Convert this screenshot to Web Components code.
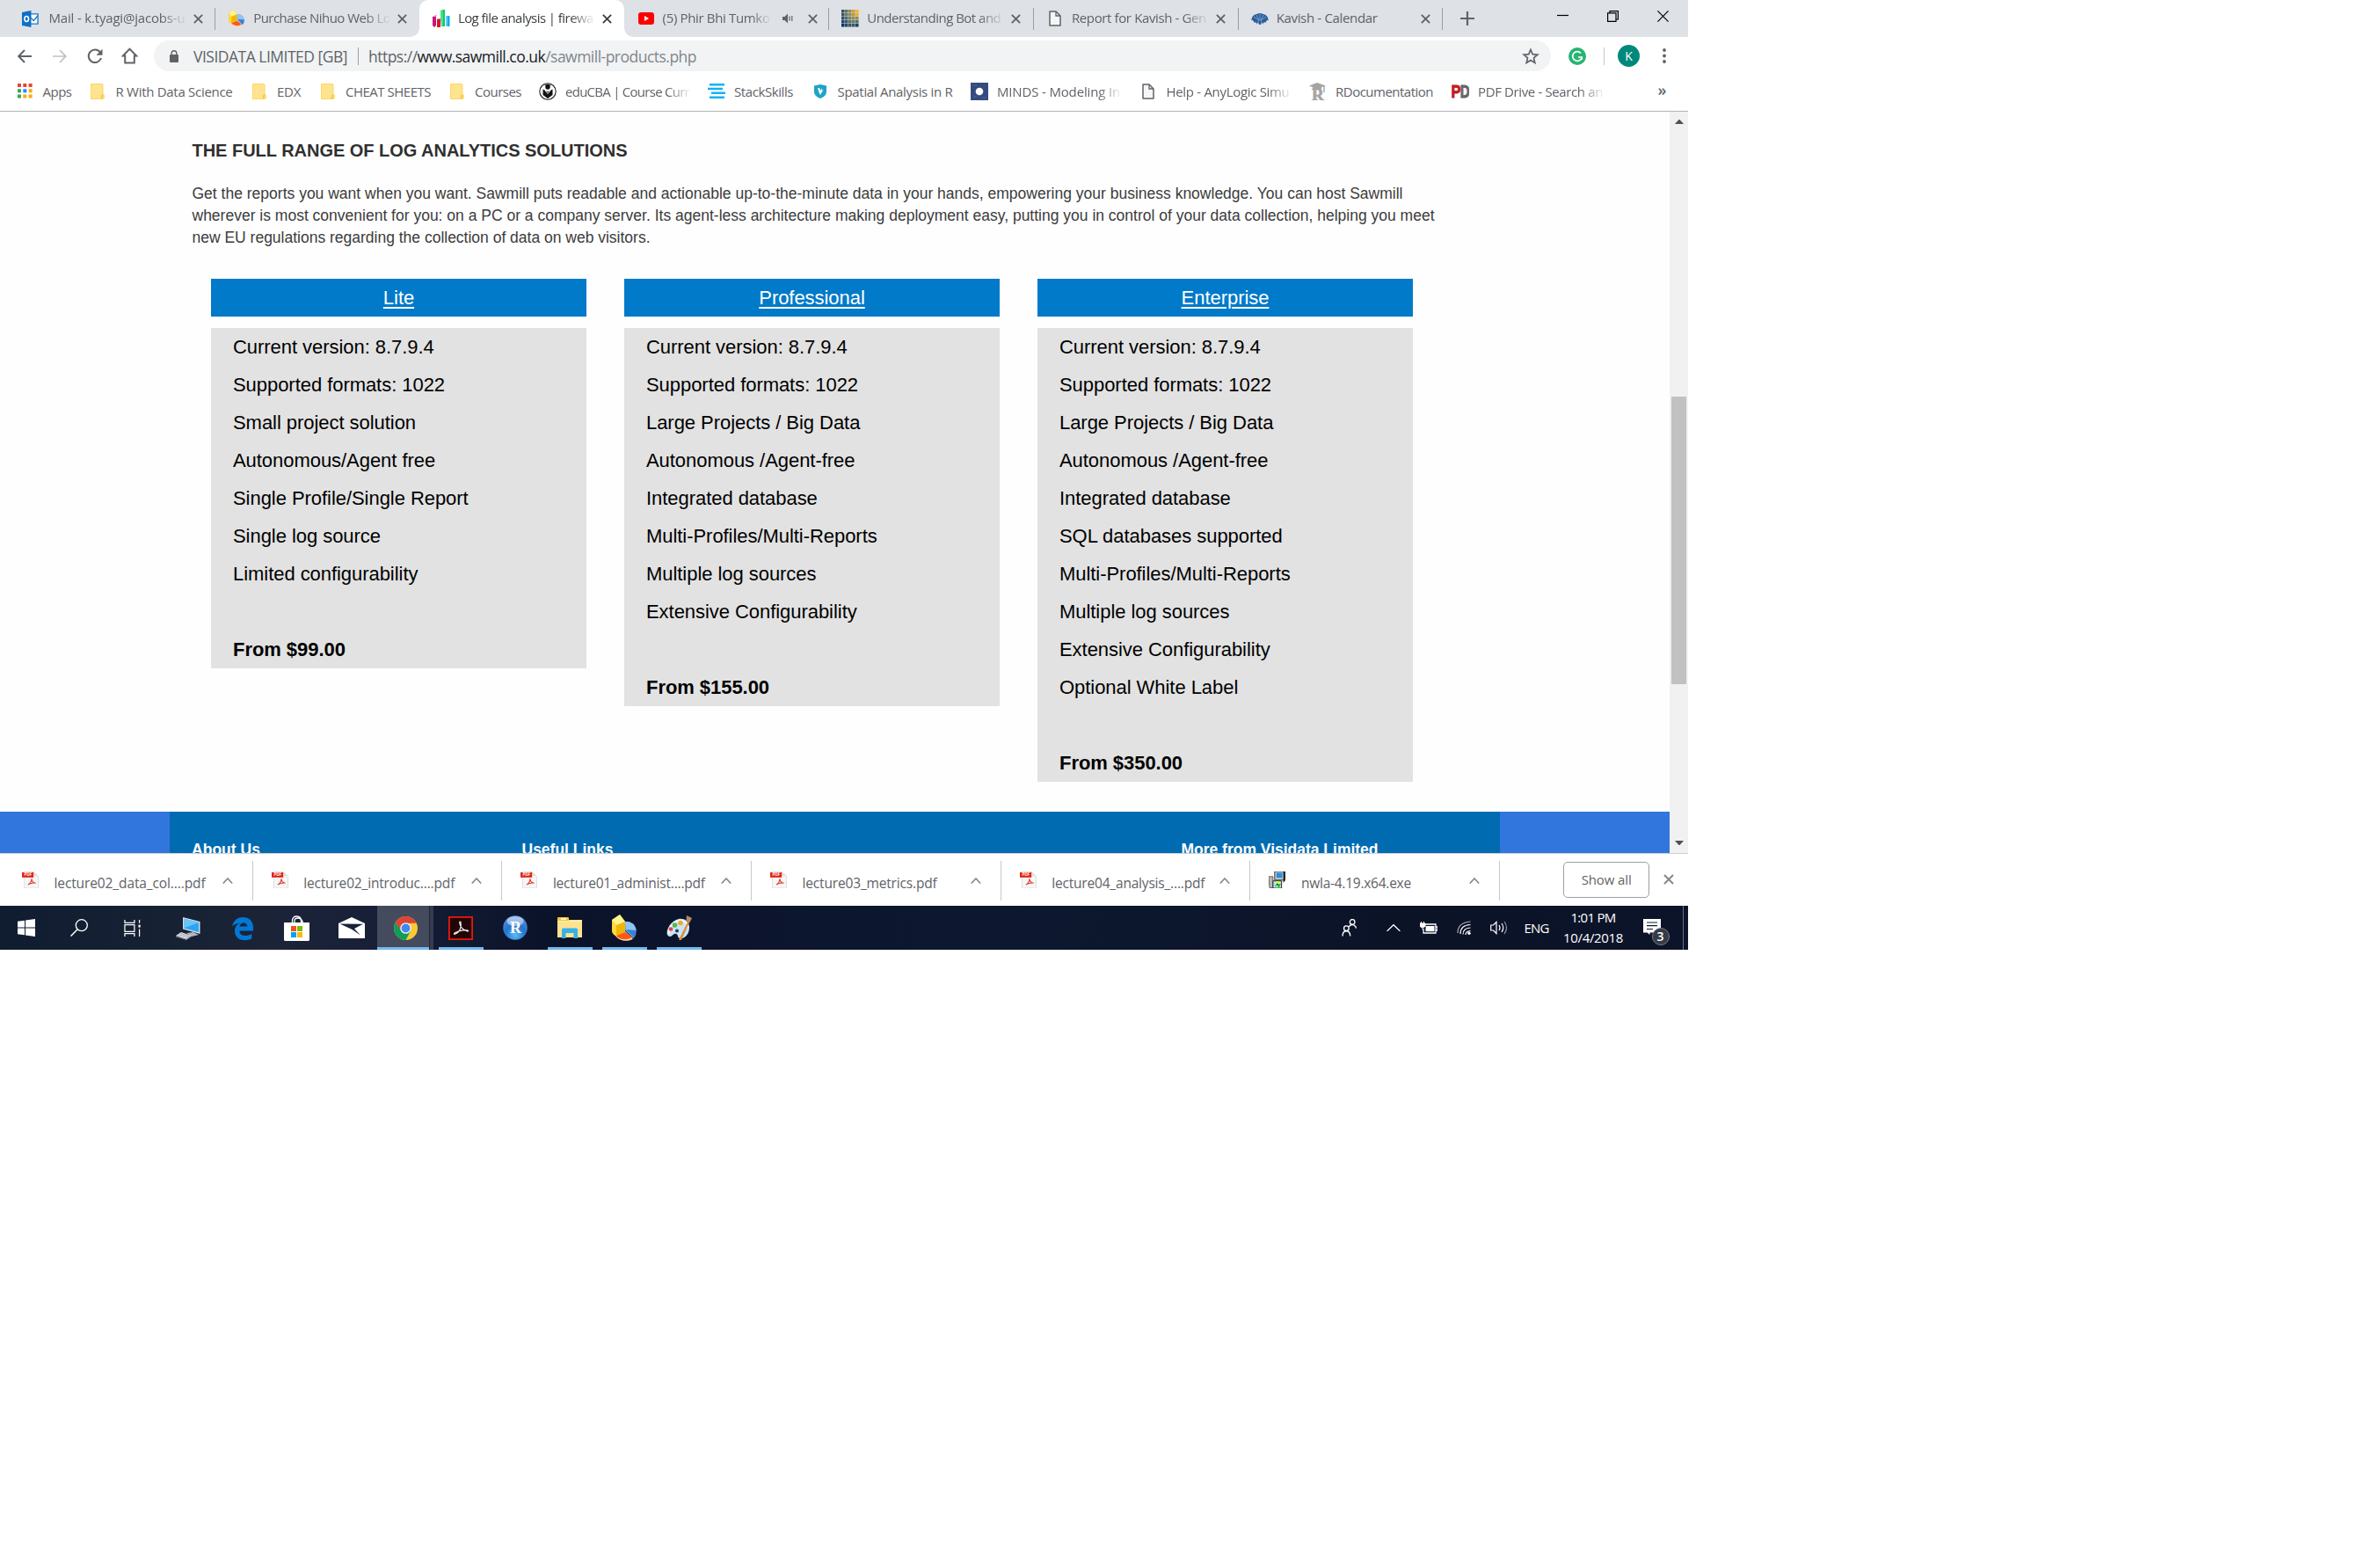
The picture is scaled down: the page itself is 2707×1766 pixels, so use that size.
<!DOCTYPE html>
<html lang="en">
<head>
<meta charset="utf-8">
<title>Log file analysis</title>
<style>
html,body{margin:0;padding:0;background:#fff}
body{font-family:"Open Sans","Noto Sans",sans-serif}
</style>
</head>
<body>
<desktop-screen></desktop-screen>
<script>
const ICONS = {
outlook:['0 0 20 20','<path d="M8 4h11v12H8z" fill="#fff" stroke="#1976c8" stroke-width="1.4"/><path d="M10 8l4 4 5-6" fill="none" stroke="#1976c8" stroke-width="1.4"/><path d="M0 2l11-2v20L0 18z" fill="#0f6fc6"/><ellipse cx="5.500" cy="10" rx="2.400" ry="3.100" fill="none" stroke="#fff" stroke-width="1.700"/>'],
pie:['0 0 28 30','<path d="M15 8a11 11 0 0 1 12.500 10q0 5-3 9L15 18z" fill="#5a9fe6"/><path d="M15 8a11 11 0 0 1 12.500 10L16 18z" fill="#8cc6f6"/><path d="M16 17l9.500 9q2.500-3 2.300-8z" fill="#3f7fd6"/><path d="M4 24l11-5 9 8.500C19 31 9 31 4 24z" fill="#ffd9b0"/><path d="M4.500 23.500L15 20l8 5.500c-4 4-14 4-18.500-2z" fill="#fc5a14"/><path d="M0 6L9 0l6 8v11L5 24.500Q0 22 0 18z" fill="#f2b705"/><path d="M0 6l5 5v13.500Q0 22 0 18z" fill="#ffd93a"/><path d="M0 6L9 0l6 8-10 4z" fill="#fff58f"/>'],
bars:['0 0 20 20','<path d="M0 8h4v10l-2 2-2-2z" fill="#c3177d"/><path d="M0 8l3-2h2l-1 2z" fill="#f39bd0"/><path d="M5 11h4v9H5z" fill="#e11529"/><path d="M5 11l1-1h4l-1 1z" fill="#f77"/><path d="M9 1l3-1h2v19h-4z" fill="#12c763"/><path d="M9 1l3-1v18l-2 1z" fill="#3ce48c"/><path d="M15 7h4.500v12H15z" fill="#1aa7ec"/><path d="M15 7h2v12h-2z" fill="#63d0ff"/>'],
youtube:['0 0 18 14','<rect width="18" height="14" rx="3.200" fill="#f00"/><path d="M7 4l5 3-5 3z" fill="#fff"/>'],
speaker:['0 0 12 12','<path d="M0 4h2.500L6 .5v11L2.500 8H0z" fill="#5f6368"/><path d="M8 3.500v5M10.800 3v6" stroke="#5f6368" stroke-width="1.200"/>'],
mosaic:['0 0 20 20',(()=>{const c=['#356','#677656','#998a4e','#c2a04a','#ffb52b','#3a5568','#667a6b','#8f8a58','#b09a58','#f7ac2a','#2d506c','#4f6a72','#7b8466','#928c58','#8f8c63','#1d456e','#365a70','#5a7070','#6b7a68','#5b7168','#0f3764','#1f4a70','#33596f','#36596c','#1a446c'];return '<rect width="20" height="20" fill="#cfd3c8"/>'+c.map((f,i)=>`<rect x="${(i%5)*4}" y="${Math.floor(i/5)*4}" width="3.500" height="3.500" fill="${f}"/>`).join('')})()],
doc:['0 0 14 18','<path d="M1 1h7l5 5v11H1z" fill="#f6f6f6" stroke="#5f6368" stroke-width="1.500" stroke-linejoin="round"/><path d="M8 1v5h5" fill="none" stroke="#5f6368" stroke-width="1.300"/>'],
fan:['0 0 20 13','<ellipse cx="10" cy="6" rx="9" ry="5.500" fill="#2e5f9c"/><path d="M0 8Q2 1 10 0q8 1 10 8l-4-1 1 4-3-3 0 5-2-5-1 5h-2l-1-5-2 5 0-5-3 3 1-4z" fill="#2e5f9c"/><path d="M3 4l6 4M6 2l3 6M10 1v7M14 2l-3 6M17 4l-6 4M7 12l2-4M13 12l-2-4" stroke="#a9c2de" stroke-width=".6"/>'],
close:['0 0 10 10','<path d="M.8.8l8.400 8.400M9.200.8L.8 9.200" stroke="currentColor" stroke-width="1.700"/>'],
plus:['0 0 16 16','<path d="M8 0v16M0 8h16" stroke="#5f6368" stroke-width="2.200"/>'],
min:['0 0 13 13','<path d="M0 5.500h13" stroke="#000" stroke-width="1.200"/>'],
restore:['0 0 13 13','<path d="M.6 2.900h9.400v9.500H.6zM3 2.900V.6h9.400V10H10" fill="none" stroke="#000" stroke-width="1.200"/>'],
winclose:['0 0 13 13','<path d="M.4.4l12.200 12.200M12.600.4L.4 12.600" stroke="#000" stroke-width="1.200"/>'],
back:['0 0 16 16','<path d="M16 8H1.500M8 1L1.200 8 8 15" fill="none" stroke="currentColor" stroke-width="1.900"/>'],
fwd:['0 0 16 16','<path d="M0 8h14.500M8 1l6.800 7L8 15" fill="none" stroke="currentColor" stroke-width="1.700"/>'],
reload:['0 0 18 18','<path d="M15 4.500A7.300 7.300 0 1 0 16 11" fill="none" stroke="#5f6368" stroke-width="2"/><path d="M17.500.8v7h-7z" fill="#5f6368"/>'],
home:['0 0 18 18','<path d="M9 1.500L1.800 9H4v7.500h10V9h2.200z" fill="none" stroke="#5f6368" stroke-width="1.900"/>'],
lock:['0 0 10 14','<rect y="5" width="10" height="9" rx="1" fill="#5f6368"/><path d="M2.200 6V3.600a2.800 2.800 0 0 1 5.600 0V6" fill="none" stroke="#5f6368" stroke-width="1.400"/>'],
star:['0 0 20 20','<path d="M10 2.500l2.200 5.200 5.600.5-4.300 3.700 1.300 5.500L10 14.500l-4.800 2.900 1.300-5.500L2.200 8.200l5.600-.5z" fill="none" stroke="#5f6368" stroke-width="1.700"/>'],
gram:['0 0 20 20','<circle cx="10" cy="10" r="10" fill="#26b572"/><path d="M14 6.500A5.300 5.300 0 1 0 15.200 11H11M15.200 11v3" fill="none" stroke="#fff" stroke-width="1.700"/>'],
dots:['0 0 4 17','<g fill="#5f6368"><circle cx="2" cy="2" r="1.900"/><circle cx="2" cy="8.500" r="1.900"/><circle cx="2" cy="15" r="1.900"/></g>'],
apps:['0 0 17 17','<g fill="#ea4335"><path d="M0 0h4v4H0zM6.300 0h4v4h-4zM12.600 0h4v4h-4z"/></g><path d="M0 6.300h4v4H0zM0 12.600h4v4H0z" fill="#34a853"/><path d="M6.300 6.300h4v4h-4z" fill="#1a8cff"/><path d="M12.600 6.300h4v4h-4zM6.300 12.600h4v4h-4zM12.600 12.600h4v4h-4z" fill="#fbab0b"/>'],
folder:['0 0 16 18','<path d="M0 1q0-1 1-1h12q1.500 0 1.500 1.500V12q1.500.5 1.500 3t-2 3H1q-1 0-1-1z" fill="#fcd766"/><path d="M1 1h12.500v11q-2 1-2 5H1z" fill="#fee48f"/><path d="M12.500 17v-2.500q0-1.500 1.500-1.500" fill="none" stroke="#e8bb3c" stroke-width=".8"/>'],
edu:['0 0 20 20','<circle cx="10" cy="10" r="9.200" fill="#fff" stroke="#222" stroke-width="1.100"/><circle cx="10" cy="5" r="2.700" fill="#111"/><path d="M6 3l4-1.500L14 3l-4 1.500z" fill="#111"/><path d="M4.500 7.500L10 10.500l5.500-3v6.500L10 18l-5.500-4z" fill="#111"/><path d="M7 9l3 3.500L13 9" fill="none" stroke="#fff" stroke-width=".9"/>'],
stack:['0 0 20 17','<path d="M2 1.200h17M0 6h17M4 10.800h16M2 15.800h17" stroke="#12b2f3" stroke-width="2.500"/>'],
shield:['0 0 14 16','<path d="M7 0l7 1.500v7Q14 13 7 16 0 13 0 8.500v-7z" fill="#1fa3c9"/><path d="M4 4l1.500 5L7 12l2-3.500 2-3-2 1.500-.5-3-1 3L6 4z" fill="#fff"/>'],
minds:['0 0 20 20','<rect width="20" height="20" fill="#354b80"/><circle cx="10" cy="10" r="4.300" fill="#fff"/><path d="M2 3h5M13 17h5M3 16h4" stroke="#4a609a"/>'],
rdoc:['0 0 19 20','<path d="M0 3.500L9 0l10 3.500L9 7.500z" fill="#a5a5a5"/><path d="M4 5h10v3H4z" fill="#a5a5a5"/><path d="M17 3v8" stroke="#aaa" stroke-width="1.500"/><text x="3" y="20" font-family="Liberation Serif" font-weight="bold" font-size="19" fill="#a5a5a5" stroke="#a5a5a5" stroke-width=".7">R</text>'],
pd:['0 0 20 17','<text x="-.5" y="16.200" font-family="Liberation Sans" font-weight="bold" font-size="21" fill="#c41a20" textLength="11" lengthAdjust="spacingAndGlyphs" stroke="#c41a20">P</text><text x="9.700" y="16.200" font-family="Liberation Sans" font-weight="bold" font-size="21" fill="#666" textLength="11" lengthAdjust="spacingAndGlyphs" stroke="#666">D</text>'],
up:['0 0 10 5','<path d="M0 5L4.500 0h1L10 5z" fill="#505050"/>'],
down:['0 0 10 5','<path d="M0 0L4.500 5h1L10 0z" fill="#505050"/>'],
chev:['0 0 12 7','<path d="M.8 6.500L6 1l5.200 5.500" fill="none" stroke="#858585" stroke-width="1.600"/>'],
pdf:['0 0 20 20','<path d="M2.500 .5h11.500l5 5v14H2.500z" fill="#f6f6f6" stroke="#d4d4d4" stroke-width=".7"/><path d="M14 .5v5h5" fill="#e0e0e0"/><rect y="1" width="13.500" height="6" fill="#e02412"/><text x="2.600" y="5.600" font-family="Liberation Sans" font-weight="bold" font-size="4.600" fill="#fff">PDF</text><path d="M7 15.500q4-2 4.300-7 .5 5 4.700 5-5-.5-9 2" fill="none" stroke="#e5372a" stroke-width="1.100"/>'],
exe:['0 0 20 20','<path d="M0 6h5v13H1z" fill="#b9b9b9" stroke="#444" stroke-width=".8"/><path d="M7 0h12v10H7z" fill="#c9cdd0" stroke="#333" stroke-width="1"/><path d="M9 1.500h7v6H9z" fill="#2a8fe0"/><path d="M17 0h2v11l-2 2z" fill="#222"/><path d="M5 11h10v8.500H5z" fill="#ddd" stroke="#222" stroke-width="1"/><circle cx="10" cy="15" r="3.800" fill="#b8f0a0"/><path d="M10 15l4-1q0 4-3 4.800z" fill="#0c3"/><path d="M10 15l2-3.500 2 2z" fill="#ff0"/><path d="M10 15l-3.500 1 2 3z" fill="#4cf"/><circle cx="10" cy="15" r="1" fill="#222"/>'],
win:['0 0 20 20','<path d="M0 2.800l8-1.100v7.800H0zM9 1.500L20 0v9.500H9zM0 10.500h8v7.800l-8-1.100zM9 10.500h11V20L9 18.500z" fill="#fff"/>'],
search:['0 0 20 20','<circle cx="12.800" cy="7.200" r="6.500" fill="none" stroke="#fff" stroke-width="1.300"/><path d="M8.200 11.800L.5 19.500" stroke="#fff" stroke-width="1.500"/>'],
task:['0 0 20 20','<path d="M1 0v3.500h11.500V0M1 20v-3.500h11.500V20M1 6h11.500v8H1zM18.500 0v4M18.500 11v9" fill="none" stroke="#fff" stroke-width="1.300"/><path d="M17.300 6h2.400v3h-2.400z" fill="#fff"/>'],
pc:['0 0 28 26','<path d="M8 0l19.500 5v14L8 13.500z" fill="#d5dde2"/><path d="M9 1.500L26 6v11L9 12.500z" fill="#2ba5f5"/><path d="M9 1.500L26 6 9 12.500z" fill="#6ac4fa"/><path d="M12 18l8-1 6 3-8 2z" fill="#aeb7bd"/><path d="M0 21l6-4 12 4-6 4z" fill="#dfe4e7"/><path d="M0 21v1l12 3.500 6-4" fill="none" stroke="#7f8a92"/><path d="M3 20l12 3M5 18.500l11 3" stroke="#8d979e" stroke-width=".7"/>'],
edge:['0 0 24 26','<path d="M0 10.500C1.500 3 7 0 12.500 0 20 0 24 5.500 24 11.500v4H8.300c.2 6.500 9 6.500 14 3.500v5.200C14 28.500 3 26 3 15.500 3 11 6 8 9.200 6.600 4.500 7 2 8.700 0 10.500zM8.500 10.600h8.800C17.200 5 9.300 5 8.500 10.600z" fill="#0078d7"/>'],
store:['0 0 29 29','<path d="M9.500 9V6.500C9.500 2 12 1 14.500 1s5 1 5 5.500V9M12 9V5.500q.3-2.500 4-2.500t5.500 5" fill="none" stroke="#fff" stroke-width="1.300"/><path d="M0 8h29v19.500q0 1.500-1.500 1.500h-26Q0 29 0 27.500z" fill="#fff"/><path d="M8 12h6v6H8z" fill="#f25022"/><path d="M15 12h6v6h-6z" fill="#7fba00"/><path d="M8 19h6v6H8z" fill="#00a4ef"/><path d="M15 19h6v6h-6z" fill="#ffb900"/>'],
mail:['0 0 30 24','<path d="M0 7L15 0l15 7v17H0z" fill="#fff"/><path d="M1.500 7.500L28 7.800 18 13l7 7.500-9.500-6.500z" fill="#172237"/>'],
chrome:['0 0 28 28','<circle cx="14" cy="14" r="14" fill="#fcc934"/><path d="M14 14L1.900 7A14 14 0 0 1 26.100 7L14 8z" fill="#db4437"/><path d="M14 8h12.500A14 14 0 0 0 1.900 7L8 17z" fill="#db4437"/><path d="M1.900 7A14 14 0 0 0 14 28l5.800-11L14 20l-5.500-3z" fill="#0f9d58"/><circle cx="14" cy="14" r="6.500" fill="#f1f1f1"/><circle cx="14" cy="14" r="5.100" fill="#4285f4"/>'],
acro:['0 0 28 27','<rect width="28" height="27" fill="#e31b0c"/><rect x="1.800" y="1.800" width="24.400" height="23.400" fill="#230404"/><path d="M7 20.500q9-4 7-14-1.500-1-1.300 1 1 7 9 9.500 1 .5.500-1-5-1.500-14.500 2.500-2 1-.7 2z" fill="none" stroke="#eee" stroke-width="1.200"/>'],
rstudio:['0 0 28 28','<defs><radialGradient id="rg" cx=".5" cy=".8" r=".8"><stop offset="0" stop-color="#5fbdf5"/><stop offset=".5" stop-color="#2474cd"/><stop offset="1" stop-color="#5d8fd8"/></radialGradient></defs><circle cx="14" cy="14" r="13.800" fill="url(#rg)"/><ellipse cx="14" cy="6.500" rx="9.500" ry="5.500" fill="#fff" opacity=".5"/><text x="14.500" y="20" text-anchor="middle" font-family="Liberation Serif" font-weight="bold" font-size="18" fill="#fff">R</text>'],
explorer:['0 0 28 24','<path d="M0 1h9l3 2h16v20H0z" fill="#fde28f"/><path d="M0 1Q0 0 1 0h11q1 0 1 1v3H0z" fill="#fbc625"/><path d="M4 1h6v2H4z" fill="#fff6cf"/><path d="M0 4h28v1H0z" fill="#ffefb4"/><path d="M5 24V14q0-1.500 1.500-1.500h15q1.500 0 1.500 1.500v10h-4.500v-6h-9v6z" fill="#35b1e8"/>'],
paint:['0 0 29 29','<path d="M1 22C-1 16 5 6 14 4c8-1 12 4 12 10 0 8-6 13-11 12-3-1-1-4-4-5s-4 3-7 3q-2 0-3-2z" fill="#c9e4f4"/><path d="M3 21C2 15 7 8 14 6c6-1 10 3 10 8" fill="none" stroke="#eef8ff" stroke-width="2"/><circle cx="5" cy="15.500" r="2.300" fill="#e2444d"/><circle cx="9.500" cy="11" r="2.800" fill="#58b947"/><circle cx="16" cy="8.500" r="2.700" fill="#f6a821"/><circle cx="12" cy="17.500" r="1.900" fill="#24395f"/><path d="M25.500 4.500L14 28l3 0L27 6z" fill="#e08a35"/><path d="M23 0l6 3-2.500 5-4-2z" fill="#b98a62"/>'],
people:['0 0 18 20','<g fill="none" stroke="#fff" stroke-width="1.400"><circle cx="12.500" cy="3.500" r="2.900"/><path d="M8.500 9q1.500-2.200 4-2.200 3.500 0 4.500 4.200"/><circle cx="5.500" cy="11" r="2.900"/><path d="M1 20q.3-5.800 4.500-5.800T10 20"/></g>'],
traychev:['0 0 17 9','<path d="M.6 8.400l7.900-7.700 7.900 7.700" fill="none" stroke="#fff" stroke-width="1.400"/>'],
battery:['0 0 20 14','<path d="M5 3h13v10H4V8M18 6h2v4h-2" fill="none" stroke="#fff" stroke-width="1.300"/><path d="M6.500 5h10v6.200h-10z" fill="#fff"/><path d="M0 2h6v2.500q0 2-3 2t-3-2zM1.500 0v2M4.500 0v2M3 6v3" fill="#fff" stroke="#fff"/>'],
wifi:['0 0 16 16','<g fill="none" stroke="#fff" stroke-width="1.200"><path d="M1 14Q1 2 15.500 1" opacity=".65"/><path d="M4 15Q4 5 15.500 4.500M7 15.500Q7 8.500 15.500 8M10 16q0-4 5.500-4.500"/></g><circle cx="14" cy="14.300" r="1.700" fill="#fff"/>'],
volume:['0 0 20 16','<path d="M.7 5h2.800L7 1.500v13L3.500 11H.7z" fill="none" stroke="#fff" stroke-width="1.200"/><path d="M10 5q2 3 0 6M13 3q3.500 5 0 10" fill="none" stroke="#fff" stroke-width="1.200"/><path d="M16 1q5 7 0 14" fill="none" stroke="#8d93a0" stroke-width="1.200"/>'],
note:['0 0 20 18','<path d="M0 0h20v15.500H7.500V18L4.500 15.500H0z" fill="#fff"/><path d="M4 4h12M4 7.700h12M4 11.500h7" stroke="#101a33" stroke-width="1.200"/>']
};

const define = (name, html) => customElements.define(name, class extends HTMLElement {
  connectedCallback() {
    if (this.shadowRoot) return;
    this.attachShadow({mode:'open'}).innerHTML = typeof html === 'function' ? html(this) : html;
  }
});

define('ui-icon', el => {
  const [vb, body] = ICONS[el.getAttribute('name')];
  const [,, w, h] = vb.split(' ').map(Number);
  const width = +(el.getAttribute('w') || w);
  return `<style>:host{display:block;flex:none;width:${width}px;height:${width*h/w}px}svg{display:block;width:100%;height:100%}</style><svg viewBox="${vb}">${body}</svg>`;
});

/* a browser tab: favicon, fading title, close button */
define('browser-tab', el => `<style>
:host{display:flex;align-items:center;position:relative;box-sizing:border-box;width:232.700px;height:42px;padding-left:12px;flex:none;color:#5f6368;font-size:15px}
.ico{width:26px;display:flex;justify-content:center;margin-right:6px;flex:none}
:host([near]) .ico{width:22px;margin-right:10px}
.title{width:156px;overflow:hidden;flex:none;white-space:nowrap;position:relative;top:-1px}
.fade{-webkit-mask-image:linear-gradient(90deg,#000 82%,transparent 100%)}
:host([muted]) .title{width:123px}
.snd{margin:0 9px 0 13px;display:none}
:host([muted]) .snd{display:block}
.x{margin-left:8px}
:host([sep])::after{content:"";position:absolute;right:-1px;top:9px;width:1px;height:25px;background:#9a9da1}
:host([active]){background:#fff;color:#3c4043;border-radius:10px 10px 0 0}
:host([active])::before,:host([active])::after{content:"";position:absolute;bottom:0;width:10px;height:10px}
:host([active])::before{left:-10px;background:radial-gradient(circle at 0 0,transparent 9.500px,#fff 10px)}
:host([active])::after{right:-10px;background:radial-gradient(circle at 100% 0,transparent 9.500px,#fff 10px)}
</style><div class="ico"><ui-icon name="${el.getAttribute('icon')}" w="${el.getAttribute('iw')}"></ui-icon></div>
<div class="title ${el.hasAttribute('nofade')?'':'fade'}"><fit-text w="${el.getAttribute('tw')}">${el.textContent}</fit-text></div>
${el.hasAttribute('muted')?'<ui-icon class="snd" name="speaker" w="12"></ui-icon>':''}<ui-icon class="x" name="close" w="11"></ui-icon>`);

define('tab-strip', `<style>
:host{display:flex;height:42px;background:#dee1e6;padding-left:11.500px;box-sizing:border-box;width:1920px}
.plus{margin:13px 0 0 20.500px}
.win{display:flex;margin-left:auto;padding:12px 22.500px 0 0;gap:44px}
</style>
<browser-tab icon="outlook" iw="19" tw="155" sep near>Mail - k.tyagi@jacobs-u</browser-tab>
<browser-tab icon="pie" iw="18" tw="156">Purchase Nihuo Web Lo</browser-tab>
<browser-tab icon="bars" iw="20" tw="154" active>Log file analysis | firewa</browser-tab>
<browser-tab icon="youtube" iw="18" tw="122" muted sep>(5) Phir Bhi Tumko</browser-tab>
<browser-tab icon="mosaic" iw="20" tw="152" sep>Understanding Bot and</browser-tab>
<browser-tab icon="doc" iw="14" tw="153" sep>Report for Kavish - Gen</browser-tab>
<browser-tab icon="fan" iw="20" tw="115" sep nofade>Kavish - Calendar</browser-tab>
<ui-icon class="plus" name="plus" w="16"></ui-icon>
<div class="win"><ui-icon name="min" w="13"></ui-icon><ui-icon name="restore" w="13"></ui-icon><ui-icon name="winclose" w="13"></ui-icon></div>`);

define('address-bar', `<style>
:host{display:flex;align-items:center;height:40px;padding:3px 0 0 20px;width:1920px;box-sizing:border-box;color:#5f6368}
.nav{display:flex;align-items:center;width:155px}
.nav ui-icon:nth-child(2){margin-left:24px;color:#bdc1c6}.nav ui-icon:nth-child(3){margin-left:23px}.nav ui-icon:nth-child(4){margin-left:21px}
.box{display:flex;align-items:center;box-sizing:border-box;width:1589px;height:35px;border-radius:17.500px;background:#f1f3f4;padding:0 13px 0 18px;font-size:17.500px;white-space:nowrap}
.org{margin-left:17px}.sep{width:1px;height:20px;background:#9aa0a6;margin:0 11px 0 12px}
.url{color:#80868b}.dark{color:#202124}.lead{color:#5f6368}
.box ui-icon:last-child{margin-left:auto}
.g{margin-left:20px}.s2{width:1px;height:20px;background:#c5c7ca;margin:0 15px 0 20px}
.k{width:25px;height:25px;border-radius:50%;background:#00897b;color:#fff;font-size:14px;display:flex;align-items:center;justify-content:center}
.d{margin-left:26px}
</style><div class="nav"><ui-icon name="back" w="16"></ui-icon><ui-icon name="fwd" w="16"></ui-icon><ui-icon name="reload" w="18"></ui-icon><ui-icon name="home" w="19"></ui-icon></div>
<div class="box"><ui-icon name="lock" w="10"></ui-icon><fit-text class="org" w="175">VISIDATA LIMITED [GB]</fit-text><div class="sep"></div><fit-text class="url" w="373"><span class="lead">https://</span><span class="dark">www.sawmill.co.uk</span>/sawmill-products.php</fit-text><ui-icon name="star" w="20"></ui-icon></div>
<ui-icon class="g" name="gram" w="20"></ui-icon><div class="s2"></div><div class="k">K</div><ui-icon class="d" name="dots" w="4"></ui-icon>`);

/* bookmark: slot width p, gap g after the icon, title width tw */
define('book-mark', el => `<style>
:host{display:flex;align-items:center;flex:none;width:${el.getAttribute('p')}px;font-size:15px;color:#5f6368;white-space:nowrap}
.t{margin-left:${el.getAttribute('g')}px}
:host([fade]) .t{-webkit-mask-image:linear-gradient(90deg,#000 82%,transparent 102%)}
</style><ui-icon name="${el.getAttribute('icon')}" w="${el.getAttribute('iw')}"></ui-icon><fit-text class="t" w="${el.getAttribute('tw')}">${el.textContent}</fit-text>`);

define('bookmark-bar', `<style>:host{display:flex;align-items:center;box-sizing:border-box;width:1920px;height:45px;padding:0 0 1px 19.500px;border-bottom:1px solid #b4b4b4}
.more{font-size:18px;font-weight:600;color:#5f6368;line-height:20px;position:relative;top:-2px}</style>
<book-mark icon="apps" iw="17" g="12" tw="33" p="83.500">Apps</book-mark>
<book-mark icon="folder" iw="16" g="12.500" tw="133" p="184">R With Data Science</book-mark>
<book-mark icon="folder" iw="16" g="12" tw="27" p="78">EDX</book-mark>
<book-mark icon="folder" iw="16" g="12" tw="97" p="147">CHEAT SHEETS</book-mark>
<book-mark icon="folder" iw="16" g="12" tw="53" p="101">Courses</book-mark>
<book-mark icon="edu" iw="20" g="10" tw="141" p="192" fade>eduCBA | Course Curr</book-mark>
<book-mark icon="stack" iw="20" g="10" tw="67" p="121">StackSkills</book-mark>
<book-mark icon="shield" iw="14" g="12.500" tw="131" p="178">Spatial Analysis in R</book-mark>
<book-mark icon="minds" iw="20" g="10" tw="140" p="195" fade>MINDS - Modeling In</book-mark>
<book-mark icon="doc" iw="14" g="13.500" tw="140" p="190" fade>Help - AnyLogic Simu</book-mark>
<book-mark icon="rdoc" iw="19" g="11" tw="111" p="161.500">RDocumentation</book-mark>
<book-mark icon="pd" iw="20" g="10.500" tw="142" p="235" fade>PDF Drive - Search an</book-mark>
<div class="more">»</div>`);

/* product card: heading and a list of features */
define('product-card', el => `<style>
:host{display:block;width:427px;flex:none;font-size:22px;color:#000;letter-spacing:-.05px}
.h{height:43px;line-height:43px;background:#007ac9;color:#fff;text-align:center;margin-bottom:13px}
.h a{text-decoration:underline;text-underline-offset:3px;text-decoration-thickness:2px}
.b{background:#e2e2e2;padding-left:25px}
::slotted(p),.b p{margin:0;height:43px;line-height:43px;white-space:nowrap}
.price{font-weight:bold;padding-top:43px}
</style><div class="h"><a>${el.getAttribute('title-text')}</a></div><div class="b"><slot></slot><p class="price">${el.getAttribute('price')}</p></div>`);

define('site-footer', `<style>:host{display:flex;background:#3176dc;height:47px;overflow:hidden;padding-left:193px;box-sizing:border-box;width:1899px}
.in{width:1513px;background:#006bb1;color:#fff;font-weight:bold;font-size:17.500px;line-height:20px;box-sizing:border-box;padding:33px 0 0 25px;display:grid;grid-template-columns:375.500px 750px 1fr;white-space:nowrap}</style>
<div class="in"><fit-text w="78">About Us</fit-text><fit-text w="104">Useful Links</fit-text><fit-text w="224">More from Visidata Limited</fit-text></div>`);

define('scroll-bar', `<style>:host{display:flex;flex-direction:column;align-items:center;box-sizing:border-box;width:21px;height:843px;background:#f1f1f1;padding:9px 0}
.t{width:17px;height:327px;background:#c1c1c1;margin:310px 0 auto}</style>
<ui-icon name="up" w="10"></ui-icon><div class="t"></div><ui-icon name="down" w="10"></ui-icon>`);

define('page-view', `<style>
:host{display:flex;width:1920px;height:843px;overflow:hidden;font-family:"Liberation Sans",Arial,sans-serif}
.page{width:1899px;display:flex;flex-direction:column;height:843px}
main{height:796px;box-sizing:border-box;padding:31px 0 0 218.500px;background:#fefefe;color:#3c3c3c}
h1{margin:0;font-size:20px;line-height:25px;color:#2f2f2f;padding-top:1px}
.p{font-size:17.500px;line-height:25px;margin-top:24px;margin-bottom:33.500px;height:75px;display:flex;flex-direction:column;align-items:flex-start}
.cards{display:flex;gap:43px;align-items:flex-start;margin-left:21.500px}
</style><div class="page"><main><h1><fit-text w="495">THE FULL RANGE OF LOG ANALYTICS SOLUTIONS</fit-text></h1>
<div class="p"><fit-text w="1377">Get the reports you want when you want. Sawmill puts readable and actionable up-to-the-minute data in your hands, empowering your business knowledge. You can host Sawmill</fit-text><fit-text w="1413">wherever is most convenient for you: on a PC or a company server. Its agent-less architecture making deployment easy, putting you in control of your data collection, helping you meet</fit-text><fit-text w="521">new EU regulations regarding the collection of data on web visitors.</fit-text></div>
<div class="cards">
<product-card title-text="Lite" price="From $99.00"><p>Current version: 8.7.9.4</p><p>Supported formats: 1022</p><p>Small project solution</p><p>Autonomous/Agent free</p><p>Single Profile/Single Report</p><p>Single log source</p><p>Limited configurability</p></product-card>
<product-card title-text="Professional" price="From $155.00"><p>Current version: 8.7.9.4</p><p>Supported formats: 1022</p><p>Large Projects / Big Data</p><p>Autonomous /Agent-free</p><p>Integrated database</p><p>Multi-Profiles/Multi-Reports</p><p>Multiple log sources</p><p>Extensive Configurability</p></product-card>
<product-card title-text="Enterprise" price="From $350.00"><p>Current version: 8.7.9.4</p><p>Supported formats: 1022</p><p>Large Projects / Big Data</p><p>Autonomous /Agent-free</p><p>Integrated database</p><p>SQL databases supported</p><p>Multi-Profiles/Multi-Reports</p><p>Multiple log sources</p><p>Extensive Configurability</p><p>Optional White Label</p></product-card>
</div></main><site-footer></site-footer></div><scroll-bar></scroll-bar>`);

define('download-item', el => `<style>:host{display:flex;width:283.700px;height:45px;box-sizing:border-box;border-right:1px solid #c8c8c8;padding-left:21px;font-size:15.500px;color:#5f6368}
.i{margin-top:11.500px}.t{margin:14px 0 0 17px;white-space:nowrap;line-height:22px;width:172px;flex:none}.c{margin:19px 0 0 19px}</style>
<ui-icon class="i" name="${el.getAttribute('icon')||'pdf'}" w="19.500"></ui-icon><div class="t"><fit-text w="${el.getAttribute('tw')}">${el.textContent}</fit-text></div><ui-icon class="c" name="chev" w="12"></ui-icon>`);

define('download-shelf', `<style>:host{display:flex;box-sizing:border-box;width:1920px;height:60px;border-top:1px solid #cfcfcf;padding:8px 0 0 4px;background:#fff;font-size:15px}
.all{display:flex;align-items:center;justify-content:center;box-sizing:border-box;width:98px;height:41px;margin:1px 0 0 72px;border:1px solid #9c9fa3;border-radius:5px;color:#5f6368}
.all fit-text{position:relative;top:-1px}
.x{margin:15px 0 0 16px;color:#85888c}</style>
<download-item tw="172">lecture02_data_col....pdf</download-item><download-item tw="172">lecture02_introduc....pdf</download-item><download-item tw="173">lecture01_administ....pdf</download-item><download-item tw="153">lecture03_metrics.pdf</download-item><download-item tw="174">lecture04_analysis_....pdf</download-item><download-item icon="exe" tw="125">nwla-4.19.x64.exe</download-item>
<div class="all"><fit-text w="57">Show all</fit-text></div><ui-icon class="x" name="close" w="12"></ui-icon>`);

define('task-button', el => `<style>:host{display:flex;align-items:center;justify-content:center;position:relative;flex:none;width:${el.getAttribute('p')||62}px;height:50px;box-sizing:border-box;padding-top:${el.getAttribute('dy')||0}px}
:host([run])::after{content:"";position:absolute;left:6px;right:5px;bottom:0;height:3px;background:#76b9ed}
:host([on]){background:#434b5d}:host([on])::after{left:0;right:5px}:host([on])::before{content:"";position:absolute;right:0;top:0;width:4px;height:50px;background:#343c4e;border-left:1px solid #1d2536}</style>
<ui-icon name="${el.getAttribute('icon')}" w="${el.getAttribute('iw')}"></ui-icon>`);

define('task-bar', `<style>:host{display:flex;width:1920px;height:50px;box-sizing:border-box;color:#fff;font-size:15px;background:linear-gradient(90deg,#101c30 0,#1b2437 300px,#172038 430px,#0b132b 620px,#0d1830 1150px,#0b1327 1600px,#0c142a 1920px)}
.tray{display:flex;align-items:center;margin-left:auto;width:395px;box-sizing:border-box}
.clock{display:flex;flex-direction:column;align-items:center;width:68px;margin:-1px 0 0 16.500px;line-height:23px;white-space:nowrap}
.n{position:relative;margin-left:23px;margin-top:-2px}
.badge{position:absolute;left:9.500px;top:9.500px;width:20px;height:20px;box-sizing:border-box;border-radius:50%;background:#353a45;border:1px solid #777c87;font-size:14px;font-weight:600;line-height:18px;text-align:center}
.edge{width:1px;height:50px;background:#6b7180;margin-left:auto;margin-right:5px}
</style>
<task-button p="60" icon="win" iw="20"></task-button><task-button p="60" icon="search" iw="20"></task-button><task-button p="60" icon="task" iw="19"></task-button><task-button p="68" icon="pc" iw="28" dy="1"></task-button><task-button p="56" icon="edge" iw="24" dy="1"></task-button><task-button p="67" icon="store" iw="29"></task-button><task-button p="58" icon="mail" iw="30" dy="-1"></task-button><task-button p="64" icon="chrome" iw="27" run on></task-button><task-button icon="acro" iw="28" run></task-button><task-button icon="rstudio" iw="28"></task-button><task-button icon="explorer" iw="28" run></task-button><task-button icon="pie" iw="28" run></task-button><task-button icon="paint" iw="29" run></task-button>
<div class="tray"><ui-icon name="people" w="17.500" style="margin-left:1px"></ui-icon><ui-icon name="traychev" w="16" style="margin-left:33px"></ui-icon><ui-icon name="battery" w="20" style="margin-left:22px"></ui-icon><ui-icon name="wifi" w="16" style="margin-left:22px"></ui-icon><ui-icon name="volume" w="20" style="margin-left:22px"></ui-icon><fit-text w="28" style="margin-left:19px">ENG</fit-text>
<div class="clock"><fit-text w="51">1:01 PM</fit-text><fit-text w="68">10/4/2018</fit-text></div>
<div class="n"><ui-icon name="note" w="20"></ui-icon><div class="badge">3</div></div><div class="edge"></div></div>`);

define('desktop-screen', `<style>:host{display:flex;flex-direction:column;width:1920px;height:1080px;background:#fff}</style>
<tab-strip></tab-strip><address-bar></address-bar><bookmark-bar></bookmark-bar><page-view></page-view><download-shelf></download-shelf><task-bar></task-bar>`);

/* single line of text tracked to an exact width */
customElements.define('fit-text', class extends HTMLElement {
  connectedCallback() {
    if (this.shadowRoot) return;
    const w = +this.getAttribute('w');
    this.attachShadow({mode:'open'}).innerHTML = `<style>:host{display:block;flex:none;width:${w}px;white-space:nowrap}span{display:inline-block}</style><span><slot></slot></span>`;
    const s = this.shadowRoot.querySelector('span');
    s.style.letterSpacing = (w - s.getBoundingClientRect().width) / this.textContent.length + 'px';
  }
});
</script>
</body>
</html>
